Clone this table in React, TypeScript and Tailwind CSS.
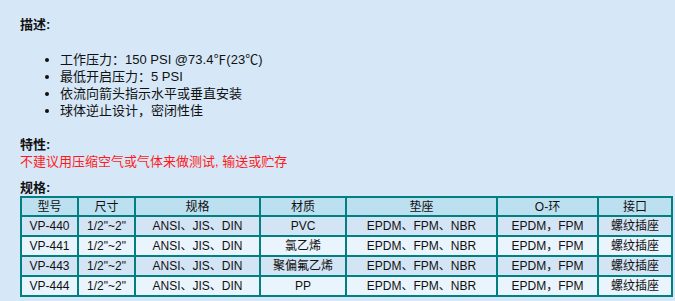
const rows = [
  { model: 'VP-440', size: '1/2"~2"', std: 'ANSI、JIS、DIN', mat: 'PVC' },
  { model: 'VP-441', size: '1/2"~2"', std: 'ANSI、JIS、DIN', mat: '氯乙烯' },
  { model: 'VP-443', size: '1/2"~2"', std: 'ANSI、JIS、DIN', mat: '聚偏氟乙烯' },
  { model: 'VP-444', size: '1/2"~2"', std: 'ANSI、JIS、DIN', mat: 'PP' },
]

const cols = ['型号', '尺寸', '规格', '材质', '垫座', 'O-环', '接口']
const widths = ['w-[57px]', 'w-[57px]', 'w-[125px]', 'w-[86px]', 'w-[151px]', 'w-[101px]', 'w-[74px]']

export default function App() {
  return (
    <div
      className="w-[675px] h-[301px] bg-[#d6e8f8] text-[#111] px-[20px] pt-[16px] overflow-hidden"
      style={{ fontFamily: '"Liberation Sans", "Noto Sans CJK SC", sans-serif' }}
    >
      <div className="text-[13px] leading-[17px] font-bold">描述:</div>
      <ul className="mt-[18px] pl-[40px] list-disc text-[13px] leading-[17px]">
        <li>工作压力：150 PSI @73.4℉(23℃)</li>
        <li>最低开启压力：5 PSI</li>
        <li>依流向箭头指示水平或垂直安装</li>
        <li>球体逆止设计，密闭性佳</li>
      </ul>
      <div className="mt-[17px] text-[13px] leading-[17px] font-bold">特性:</div>
      <div className="text-[13px] leading-[17px] text-[#ff1a1a]">不建议用压缩空气或气体来做测试, 输送或贮存</div>
      <div className="mt-[9px] text-[13px] leading-[17px] font-bold">规格:</div>
      <table className="border-collapse border-2 border-[#008080] text-[12px] text-center table-fixed w-[653px]">
        <thead>
          <tr className="bg-[#bde0f0]">
            {cols.map((c, i) => (
              <th key={c} className={`${widths[i]} border-2 border-[#008080] font-normal h-[19px] leading-[16px] p-0`}>{c}</th>
            ))}
          </tr>
        </thead>
        <tbody>
          {rows.map((r, i) => (
            <tr key={r.model} className={i % 2 === 0 ? 'bg-[#d3e4f5]' : 'bg-[#eaf4fd]'}>
              <td className="border-2 border-[#008080] h-[20px] leading-[16px] p-0">{r.model}</td>
              <td className="border-2 border-[#008080] p-0">{r.size}</td>
              <td className="border-2 border-[#008080] p-0">{r.std}</td>
              <td className="border-2 border-[#008080] p-0">{r.mat}</td>
              <td className="border-2 border-[#008080] p-0">EPDM、FPM、NBR</td>
              <td className="border-2 border-[#008080] p-0">EPDM，FPM</td>
              <td className="border-2 border-[#008080] p-0">螺纹插座</td>
            </tr>
          ))}
        </tbody>
      </table>
    </div>
  )
}
